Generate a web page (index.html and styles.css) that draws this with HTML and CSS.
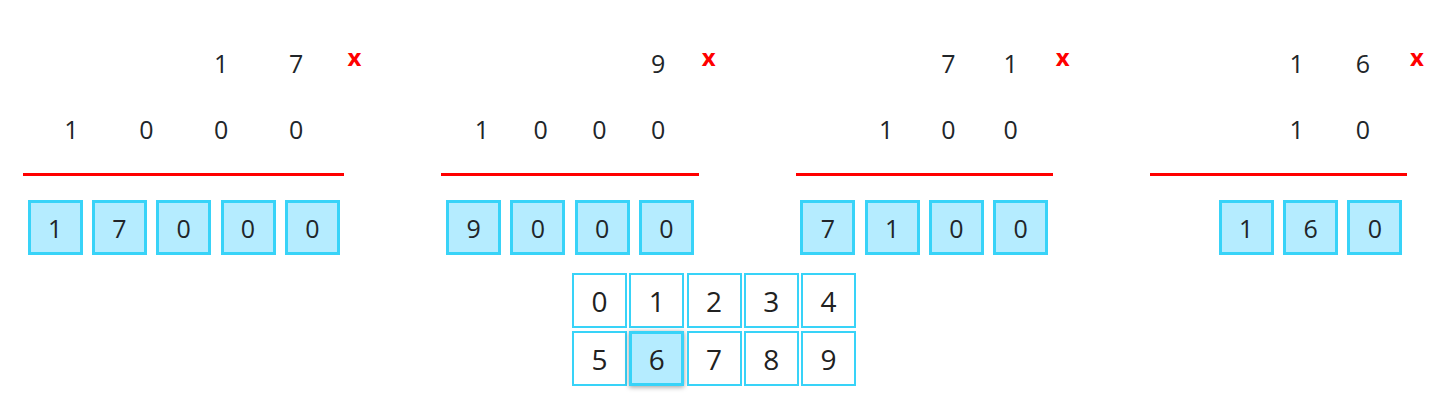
FILE: index.html
```html
<!DOCTYPE html>
<html lang="en">
<head>
<meta charset="utf-8">
<title>Multiplication</title>
<link rel="stylesheet" href="styles.css">
</head>
<body>
<main>
  <div class="problems">
    <section class="problem five" aria-label="17 x 1000">
      <div class="sum">
        <div class="factors">
          <span></span><span></span><span>1</span><span>7</span>
          <span>1</span><span>0</span><span>0</span><span>0</span>
        </div>
        <div class="answer">
          <input aria-label="Digit 1" value="1" maxlength="1"><input aria-label="Digit 2" value="7" maxlength="1"><input aria-label="Digit 3" value="0" maxlength="1"><input aria-label="Digit 4" value="0" maxlength="1"><input aria-label="Digit 5" value="0" maxlength="1">
        </div>
      </div>
      <span class="operator">x</span>
    </section>
    <section class="problem" aria-label="9 x 1000">
      <div class="sum">
        <div class="factors">
          <span></span><span></span><span></span><span>9</span>
          <span>1</span><span>0</span><span>0</span><span>0</span>
        </div>
        <div class="answer">
          <input aria-label="Digit 1" value="9" maxlength="1"><input aria-label="Digit 2" value="0" maxlength="1"><input aria-label="Digit 3" value="0" maxlength="1"><input aria-label="Digit 4" value="0" maxlength="1">
        </div>
      </div>
      <span class="operator">x</span>
    </section>
    <section class="problem" aria-label="71 x 100">
      <div class="sum">
        <div class="factors hundreds">
          <span></span><span></span><span>7</span><span>1</span>
          <span></span><span>1</span><span>0</span><span>0</span>
        </div>
        <div class="answer">
          <input aria-label="Digit 1" value="7" maxlength="1"><input aria-label="Digit 2" value="1" maxlength="1"><input aria-label="Digit 3" value="0" maxlength="1"><input aria-label="Digit 4" value="0" maxlength="1">
        </div>
      </div>
      <span class="operator">x</span>
    </section>
    <section class="problem" aria-label="16 x 10">
      <div class="sum">
        <div class="factors tens">
          <span></span><span></span><span>1</span><span>6</span>
          <span></span><span></span><span>1</span><span>0</span>
        </div>
        <div class="answer">
          <span></span><input aria-label="Digit 1" value="1" maxlength="1"><input aria-label="Digit 2" value="6" maxlength="1"><input aria-label="Digit 3" value="0" maxlength="1">
        </div>
      </div>
      <span class="operator">x</span>
    </section>
  </div>
  <div class="controls">
    <div class="keypad">
      <button type="button">0</button>
      <button type="button">1</button>
      <button type="button">2</button>
      <button type="button">3</button>
      <button type="button">4</button>
      <button type="button">5</button>
      <button type="button" class="selected" aria-pressed="true">6</button>
      <button type="button">7</button>
      <button type="button">8</button>
      <button type="button">9</button>
    </div>
  </div>
</main>
</body>
</html>
```
FILE: styles.css
```css
* {
  box-sizing: border-box;
}

body {
  margin: 0;
  background: #fff;
  color: #212529;
  font-family: "Segoe UI", "Open Sans", "Noto Sans", sans-serif;
}

.problems {
  display: flex;
  gap: 55px;
  padding: 30px 0 18px 23px;
}

.problem {
  display: flex;
  flex: 4 1 42px;
}

.problem.five {
  flex-grow: 5;
}

.sum {
  flex: 1;
  min-width: 0;
}

.factors {
  display: grid;
  grid-template-columns: repeat(4, 1fr);
  grid-auto-rows: 66px;
  align-items: center;
  justify-items: center;
  padding: 0 11px 11px;
  border-bottom: 3px solid #f00;
  font-size: 25px;
  line-height: 34px;
}

.factors.hundreds {
  grid-template-columns: 7fr 9fr 9fr 9fr;
}

.factors.tens {
  grid-template-columns: 7fr 7fr 9fr 9fr;
}

.answer {
  display: grid;
  grid-auto-flow: column;
  grid-auto-columns: minmax(0, 1fr);
  justify-items: center;
  padding-top: 24px;
}

.answer input {
  width: 55px;
  height: 55px;
  padding: 0;
  border: 3px solid #38d3f8;
  border-radius: 0;
  background: #b5ecff;
  color: inherit;
  font: inherit;
  font-size: 25px;
  text-align: center;
}

.operator {
  width: 42px;
  padding: 10px 0 0 3px;
  color: #f00;
  font-size: 24px;
  font-weight: 700;
  line-height: 34px;
}

.controls {
  padding: 0 21px 29px 0;
}

.keypad {
  display: grid;
  grid-template-columns: repeat(5, 55px);
  justify-content: space-between;
  row-gap: 3px;
  max-width: 284px;
  margin: 0 auto;
}

.keypad button {
  height: 55px;
  padding: 0;
  border: 2px solid #38d3f8;
  background: #fff;
  color: #212121;
  font: inherit;
  font-size: 28px;
  line-height: 38px;
}

.keypad .selected {
  border-width: 3px;
  background: #b5ecff;
  box-shadow: 0 1px 5px rgba(0, 0, 0, 0.4);
}
```
